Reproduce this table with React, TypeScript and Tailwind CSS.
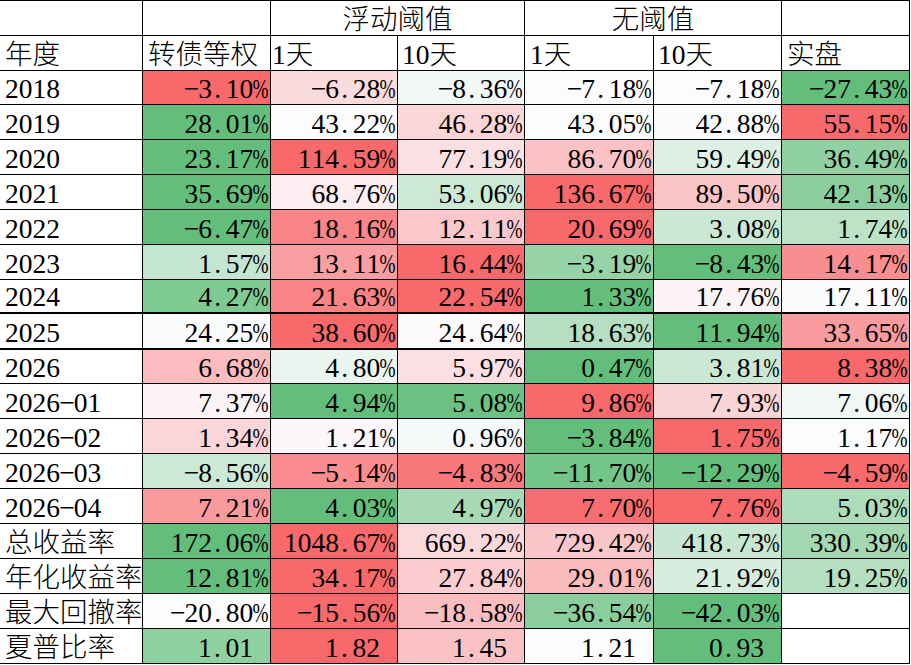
import React from "react";

type Row = { label: string; vals: (number | null)[]; pct: boolean; h: string; thick?: boolean };

const rows: Row[] = [
  { label: "2018", vals: [-3.1, -6.28, -8.36, -7.18, -7.18, -27.43], pct: true, h: "h-[34px]" },
  { label: "2019", vals: [28.01, 43.22, 46.28, 43.05, 42.88, 55.15], pct: true, h: "h-[35px]" },
  { label: "2020", vals: [23.17, 114.59, 77.19, 86.7, 59.49, 36.49], pct: true, h: "h-[35px]" },
  { label: "2021", vals: [35.69, 68.76, 53.06, 136.67, 89.5, 42.13], pct: true, h: "h-[35px]" },
  { label: "2022", vals: [-6.47, 18.16, 12.11, 20.69, 3.08, 1.74], pct: true, h: "h-[35px]" },
  { label: "2023", vals: [1.57, 13.11, 16.44, -3.19, -8.43, 14.17], pct: true, h: "h-[35px]" },
  { label: "2024", vals: [4.27, 21.63, 22.54, 1.33, 17.76, 17.11], pct: true, h: "h-[34px]", thick: true },
  { label: "2025", vals: [24.25, 38.6, 24.64, 18.63, 11.94, 33.65], pct: true, h: "h-[36px]", thick: true },
  { label: "2026", vals: [6.68, 4.8, 5.97, 0.47, 3.81, 8.38], pct: true, h: "h-[34px]" },
  { label: "2026-01", vals: [7.37, 4.94, 5.08, 9.86, 7.93, 7.06], pct: true, h: "h-[35px]" },
  { label: "2026-02", vals: [1.34, 1.21, 0.96, -3.84, 1.75, 1.17], pct: true, h: "h-[35px]" },
  { label: "2026-03", vals: [-8.56, -5.14, -4.83, -11.7, -12.29, -4.59], pct: true, h: "h-[35px]" },
  { label: "2026-04", vals: [7.21, 4.03, 4.97, 7.7, 7.76, 5.03], pct: true, h: "h-[35px]" },
  { label: "总收益率", vals: [172.06, 1048.67, 669.22, 729.42, 418.73, 330.39], pct: true, h: "h-[35px]" },
  { label: "年化收益率", vals: [12.81, 34.17, 27.84, 29.01, 21.92, 19.25], pct: true, h: "h-[35px]" },
  { label: "最大回撤率", vals: [-20.8, -15.56, -18.58, -36.54, -42.03, null], pct: true, h: "h-[35px]" },
  { label: "夏普比率", vals: [1.01, 1.82, 1.45, 1.21, 0.93, null], pct: false, h: "h-[35px]" },
];

const GREEN = [99, 190, 123];
const WHITE = [252, 252, 255];
const RED = [248, 105, 107];

const mix = (a: number[], b: number[], t: number) =>
  `rgb(${a.map((x, i) => Math.round(x + (b[i] - x) * t)).join(",")})`;

// excel style 3-colour scale per row: min green, median white, max red
const cellColor = (v: number, vals: (number | null)[]) => {
  const nums = vals.filter((x): x is number => x !== null).sort((a, b) => a - b);
  const min = nums[0];
  const max = nums[nums.length - 1];
  const n = nums.length;
  const mid = n % 2 ? nums[(n - 1) / 2] : (nums[n / 2 - 1] + nums[n / 2]) / 2;
  if (v <= mid) return mix(GREEN, WHITE, mid === min ? 1 : (v - min) / (mid - min));
  return mix(WHITE, RED, max === mid ? 0 : (v - mid) / (max - mid));
};

const fmt = (v: number, pct: boolean) => (v < 0 ? "-" : "") + Math.abs(v).toFixed(2) + (pct ? "%" : "");

// half-width cells so the numbers line up like the spreadsheet font
const Glyphs: React.FC<{ text: string }> = ({ text }) => (
  <>
    {text.split("").map((c, i) => {
      if (c.charCodeAt(0) > 255) return <span key={i} className="font-light">{c}</span>;
      if (c === "%")
        return (
          <span key={i} className="inline-flex w-[0.5em] justify-center">
            <span className="inline-block scale-x-[0.7]">%</span>
          </span>
        );
      if (c === ".")
        return (
          <span key={i} className="inline-flex w-[0.5em] justify-start pl-[0.08em]">
            .
          </span>
        );
      if (c === "-")
        return (
          <span key={i} className="inline-flex w-[0.5em] justify-center">
            −
          </span>
        );
      return (
        <span key={i} className="inline-flex w-[0.5em] justify-center">
          {c}
        </span>
      );
    })}
  </>
);

const GRID = "grid grid-cols-[143px_128px_127px_127px_129px_128px_128px] border-black";
const CELL = "flex items-end border-r border-black pb-[2px] leading-[27px] whitespace-nowrap overflow-hidden";

export default function App() {
  return (
    <div className="w-[911px] h-[665px] bg-white text-black text-[27.5px] font-[family-name:Liberation_Serif,Noto_Sans_CJK_SC,serif]">
      <div className="w-[910px] border-t border-black">
        <div className={`${GRID} h-[35px] border-b`}>
          <div className={CELL} />
          <div className={CELL} />
          <div className={`${CELL} col-span-2 justify-center pb-0`}>
            <Glyphs text="浮动阈值" />
          </div>
          <div className={`${CELL} col-span-2 justify-center pb-0`}>
            <Glyphs text="无阈值" />
          </div>
          <div className={CELL} />
        </div>

        <div className={`${GRID} h-[35px] border-b`}>
          <div className={`${CELL} pl-[5px]`}>
            <Glyphs text="年度" />
          </div>
          <div className={`${CELL} pl-[5px]`}>
            <Glyphs text="转债等权" />
          </div>
          <div className={`${CELL} pl-[1px]`}>
            <Glyphs text="1天" />
          </div>
          <div className={`${CELL} pl-[4px]`}>
            <Glyphs text="10天" />
          </div>
          <div className={`${CELL} pl-[5px]`}>
            <Glyphs text="1天" />
          </div>
          <div className={`${CELL} pl-[4px]`}>
            <Glyphs text="10天" />
          </div>
          <div className={`${CELL} pl-[5px]`}>
            <Glyphs text="实盘" />
          </div>
        </div>

        {rows.map((r) => (
          <div key={r.label} className={`${GRID} ${r.h} ${r.thick ? "border-b-2" : "border-b"}`}>
            <div className={`${CELL} pl-[5px]`}>
              <Glyphs text={r.label} />
            </div>
            {r.vals.map((v, i) =>
              v === null ? (
                <div key={i} className={CELL} />
              ) : (
                <div
                  key={i}
                  className={`${CELL} justify-end ${r.pct ? "pr-[3px]" : "pr-[17px]"}`}
                  style={{ backgroundColor: cellColor(v, r.vals) }}
                >
                  <Glyphs text={fmt(v, r.pct)} />
                </div>
              )
            )}
          </div>
        ))}
      </div>
    </div>
  );
}
